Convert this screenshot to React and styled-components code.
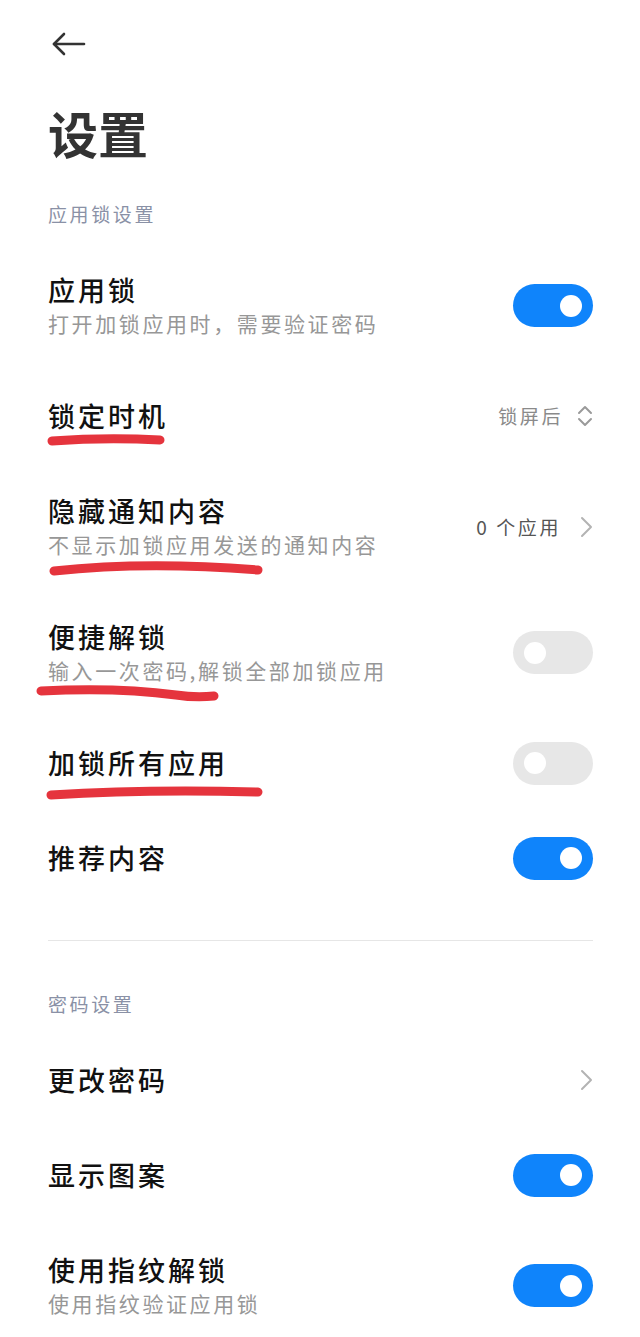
import React from 'react';
import styled, { createGlobalStyle } from 'styled-components';

const GlobalStyle = createGlobalStyle`
  html, body {
    margin: 0;
    padding: 0;
    background: #ffffff;
  }
  body {
    font-family: 'Noto Sans CJK SC', 'Noto Sans', sans-serif;
    -webkit-font-smoothing: antialiased;
  }
`;

const Page = styled.div`
  width: 640px;
  box-sizing: border-box;
  padding: 0 47px 0 48px;
  overflow: hidden;
`;

const TopBar = styled.div`
  height: 88px;
  display: flex;
  align-items: center;
`;

const BackButton = styled.button`
  border: none;
  background: none;
  padding: 0;
  margin-left: 3px;
  width: 36px;
  height: 24px;
  display: flex;
  cursor: pointer;
`;

const PageTitle = styled.h1`
  margin: 12px 0 0;
  font-size: 50px;
  line-height: 64px;
  font-weight: 700;
  letter-spacing: 0;
  color: #333333;
`;

const SectionLabel = styled.div`
  margin: ${p => p.$first ? '36px' : '0'} 0 14.5px;
  font-size: 19px;
  line-height: 28px;
  letter-spacing: 2.6px;
  color: #8a91a6;
`;

const Row = styled.div`
  position: relative;
  display: flex;
  align-items: center;
  justify-content: space-between;
  gap: 16px;
  padding: 29.5px 0;
`;

const TextCol = styled.div`
  display: flex;
  flex-direction: column;
  min-width: 0;
`;

const Title = styled.div`
  font-size: 27px;
  line-height: 36px;
  font-weight: 500;
  letter-spacing: 3px;
  color: #111111;
  white-space: nowrap;
`;

const Sub = styled.div`
  font-size: 21px;
  line-height: 31px;
  letter-spacing: 2.6px;
  color: #979797;
  white-space: nowrap;
`;

const Value = styled.div`
  display: flex;
  align-items: center;
  gap: ${p => p.$gap || 14}px;
  font-size: 19px;
  line-height: 28px;
  letter-spacing: 2.6px;
  color: ${p => p.$tone || '#8a8a8a'};
  white-space: nowrap;
`;

const Toggle = styled.div`
  position: relative;
  flex: none;
  width: 80px;
  height: 43px;
  margin: -3.5px 0;
  border-radius: 22px;
  background: ${p => (p.$on ? '#0f84fb' : '#e7e7e7')};

  &::after {
    content: '';
    position: absolute;
    top: 10.5px;
    left: ${p => (p.$on ? '47px' : '11px')};
    width: 22px;
    height: 22px;
    border-radius: 50%;
    background: #ffffff;
  }
`;

const Divider = styled.div`
  height: 1px;
  background: #e6e6e6;
  margin: 34.5px 0 49px;
`;

const Mark = styled.svg`
  position: absolute;
  left: -12px;
  top: ${p => p.$top}px;
  overflow: visible;
  pointer-events: none;
`;

const BackArrow = () => (
  <svg width="36" height="24" viewBox="0 0 36 24" fill="none" stroke="#333" strokeWidth="2.6" strokeLinecap="round" strokeLinejoin="round">
    <path d="M3 12H33" />
    <path d="M13 2L3 12L13 22" />
  </svg>
);

const UpDown = () => (
  <svg width="16" height="24" viewBox="0 0 16 24" fill="none" stroke="#9a9a9a" strokeWidth="2" strokeLinecap="round" strokeLinejoin="round">
    <path d="M2 9L8 3L14 9" />
    <path d="M2 15L8 21L14 15" />
  </svg>
);

const Chevron = () => (
  <svg width="14" height="22" viewBox="0 0 14 22" fill="none" stroke="#b3b3b3" strokeWidth="2" strokeLinecap="round" strokeLinejoin="round">
    <path d="M3 2L12 11L3 20" />
  </svg>
);

// hand-drawn red underlines from the screenshot
const Scribble = ({ top, width, d }) => (
  <Mark $top={top} width={width} height="18" viewBox={`0 0 ${width} 18`}>
    <path d={d} fill="none" stroke="#e5343d" strokeWidth="9" strokeLinecap="round" strokeLinejoin="round" />
  </Mark>
);

const firstSection = [
  { title: '应用锁', sub: '打开加锁应用时，需要验证密码', toggle: true },
  {
    title: '锁定时机',
    value: '锁屏后',
    icon: 'updown',
    mark: { top: 63.5, width: 132, d: 'M16 9 Q70 5 124 8' },
  },
  {
    title: '隐藏通知内容',
    sub: '不显示加锁应用发送的通知内容',
    value: '0 个应用',
    tone: '#555555',
    gap: 18,
    icon: 'chevron',
    mark: { top: 95.5, width: 232, d: 'M18 12 Q110 2 222 11' },
  },
  {
    title: '便捷解锁',
    sub: '输入一次密码,解锁全部加锁应用',
    toggle: false,
    mark: { top: 94.5, width: 190, d: 'M5 7 Q80 3 140 11 Q160 14 178 12' },
  },
  {
    title: '加锁所有应用',
    toggle: false,
    mark: { top: 67.5, width: 232, d: 'M15 12 Q110 6 222 9' },
  },
  { title: '推荐内容', toggle: true },
];

const secondSection = [
  { title: '更改密码', icon: 'chevron' },
  { title: '显示图案', toggle: true },
  { title: '使用指纹解锁', sub: '使用指纹验证应用锁', toggle: true },
];

const SettingRow = ({ item }) => (
  <Row>
    <TextCol>
      <Title>{item.title}</Title>
      {item.sub && <Sub>{item.sub}</Sub>}
    </TextCol>
    {typeof item.toggle === 'boolean' ? (
      <Toggle $on={item.toggle} />
    ) : (
      <Value $tone={item.tone} $gap={item.gap}>
        {item.value && <span>{item.value}</span>}
        {item.icon === 'updown' ? <UpDown /> : <Chevron />}
      </Value>
    )}
    {item.mark && <Scribble {...item.mark} />}
  </Row>
);

const App = () => (
  <Page>
    <GlobalStyle />
    <TopBar>
      <BackButton aria-label="返回">
        <BackArrow />
      </BackButton>
    </TopBar>
    <PageTitle>设置</PageTitle>

    <SectionLabel $first>应用锁设置</SectionLabel>
    {firstSection.map(item => (
      <SettingRow key={item.title} item={item} />
    ))}

    <Divider />

    <SectionLabel>密码设置</SectionLabel>
    {secondSection.map(item => (
      <SettingRow key={item.title} item={item} />
    ))}
  </Page>
);

export default App;
